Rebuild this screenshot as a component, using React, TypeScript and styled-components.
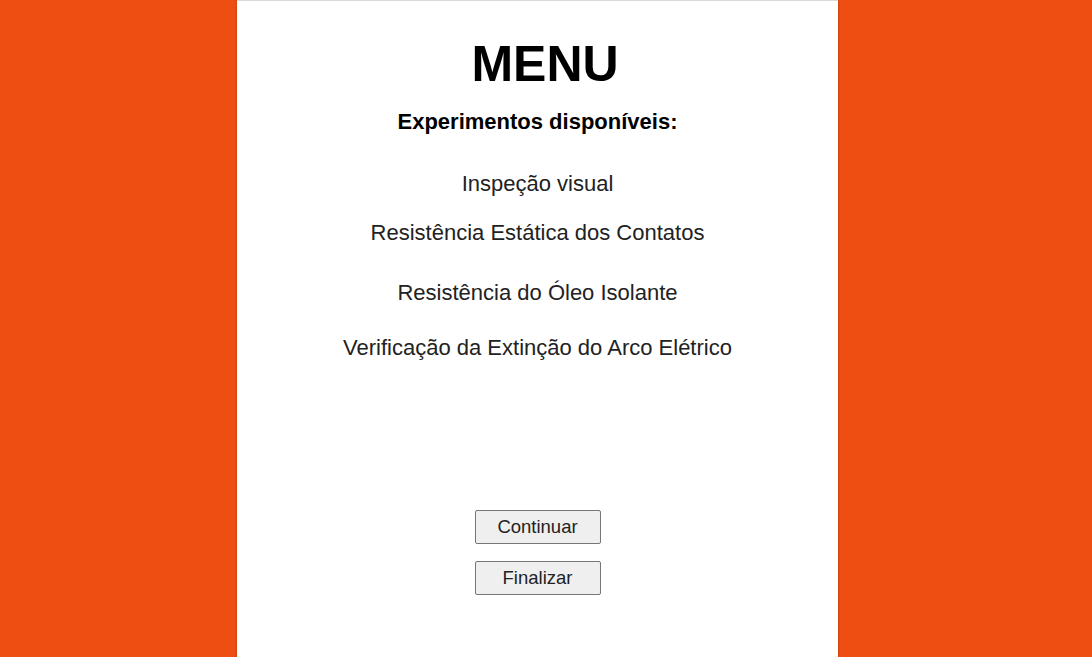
import React from "react";
import styled, { createGlobalStyle } from "styled-components";

const GlobalStyle = createGlobalStyle`
  html, body {
    margin: 0;
    padding: 0;
    height: 100%;
    background-color: #ef4e13;
    font-family: "Liberation Sans", Arial, sans-serif;
  }
  #root {
    height: 100%;
  }
`;

const Page = styled.div`
  height: 100%;
  padding-right: 17px;
  box-sizing: border-box;
`;

const Panel = styled.div`
  width: 601px;
  height: 100%;
  margin: 0 auto;
  background-color: white;
  border-top: 1px solid #d9d9d9;
  box-sizing: border-box;
  box-shadow: 0 0 3px rgba(0, 0, 0, 0.25);
  display: flex;
  flex-direction: column;
  align-items: center;
`;

const Title = styled.h1`
  font-size: 50px;
  font-weight: 700;
  color: black;
  margin: 34px 0 0;
  padding-left: 15px;
  line-height: 58px;
`;

const Subtitle = styled.h3`
  font-size: 22px;
  font-weight: 700;
  color: black;
  margin: 16px 0 0;
  line-height: 25px;
`;

const Item = styled.a<{ $gap: number }>`
  display: block;
  font-size: 22px;
  color: #222;
  text-decoration: none;
  line-height: 25px;
  margin-top: ${(props) => props.$gap}px;
  cursor: pointer;
`;

const Buttons = styled.div`
  margin-top: 150px;
  display: flex;
  flex-direction: column;
  gap: 17px;
`;

const Button = styled.button`
  width: 126px;
  height: 34px;
  font-family: "Liberation Sans", Arial, sans-serif;
  font-size: 18.5px;
  color: #222;
  background-color: #efefef;
  border: 1px solid #767676;
  border-radius: 2px;
  padding: 0;
  cursor: pointer;
`;

const items = [
  { label: "Inspeção visual", gap: 37 },
  { label: "Resistência Estática dos Contatos", gap: 24 },
  { label: "Resistência do Óleo Isolante", gap: 35 },
  { label: "Verificação da Extinção do Arco Elétrico", gap: 30 },
];

const App: React.FC = () => {
  return (
    <Page>
      <GlobalStyle />
      <Panel>
        <Title>MENU</Title>
        <Subtitle>Experimentos disponíveis:</Subtitle>
        {items.map((item) => (
          <Item key={item.label} $gap={item.gap}>
            {item.label}
          </Item>
        ))}
        <Buttons>
          <Button>Continuar</Button>
          <Button>Finalizar</Button>
        </Buttons>
      </Panel>
    </Page>
  );
};

export default App;
